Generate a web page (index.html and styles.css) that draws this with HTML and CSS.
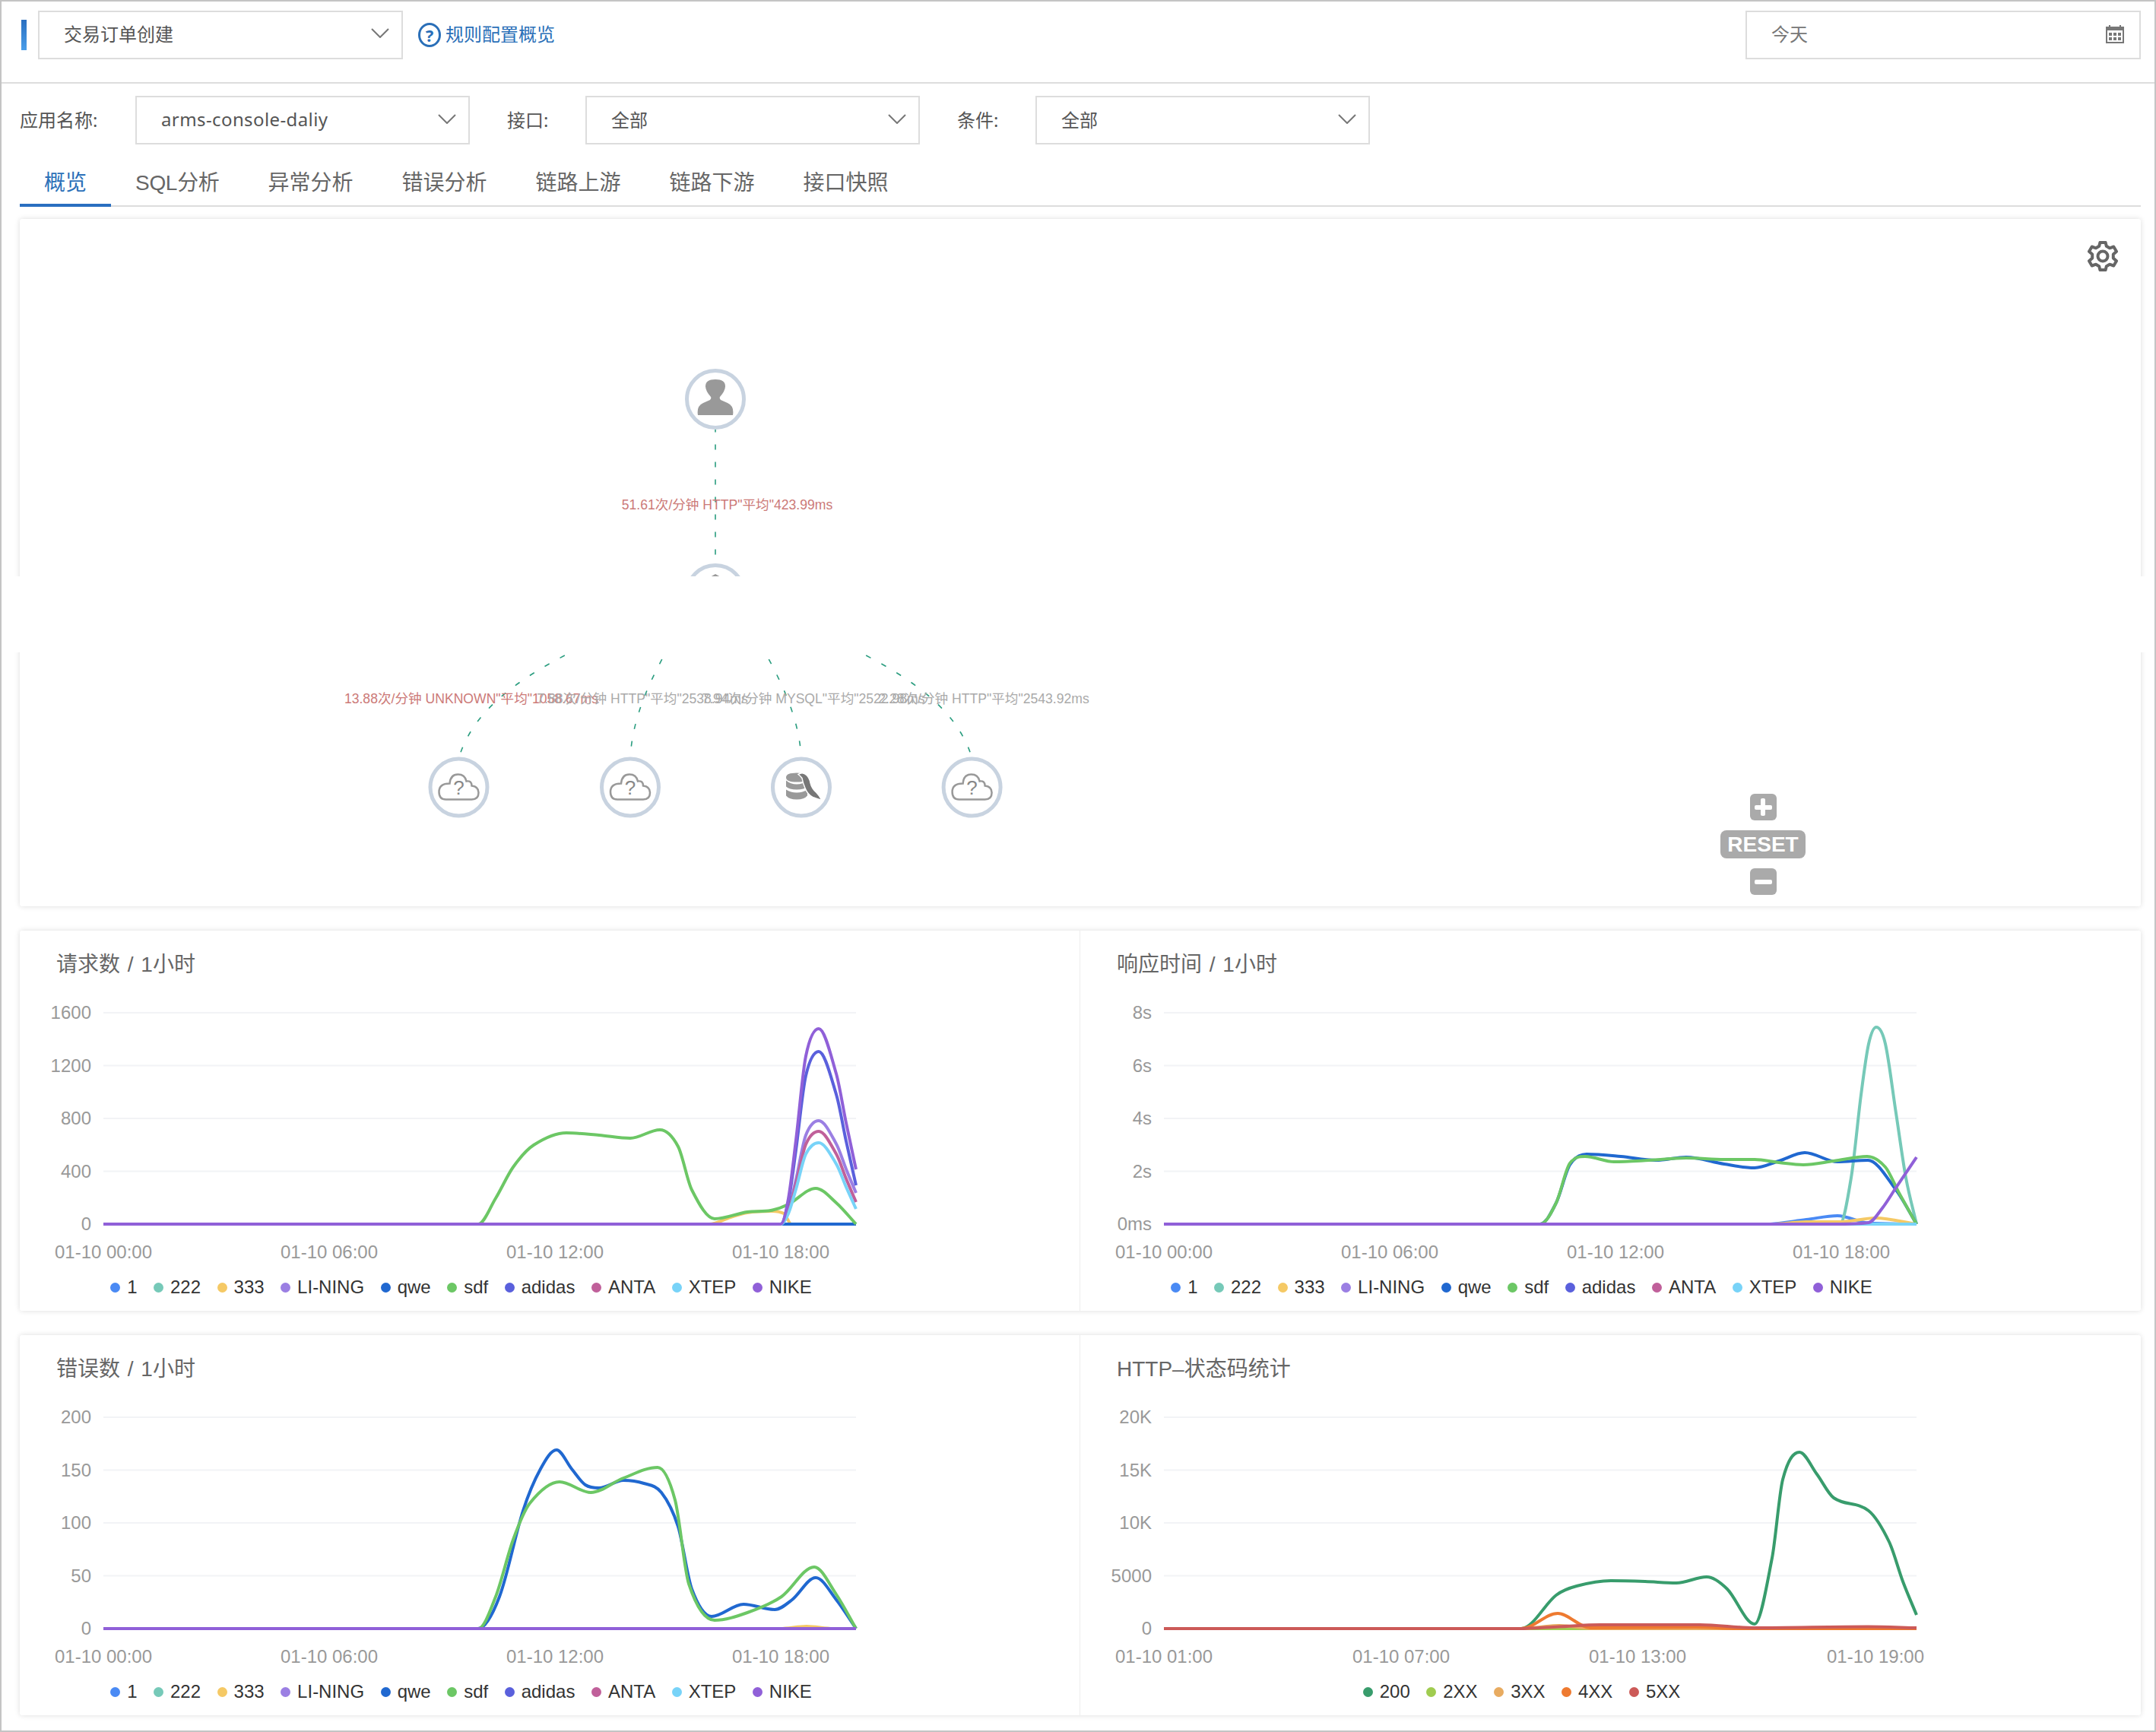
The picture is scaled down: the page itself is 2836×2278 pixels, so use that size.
FILE: index.html
```html
<!DOCTYPE html>
<html lang="en">
<head>
  <meta charset="UTF-8">
  <meta name="viewport" content="width=device-width, initial-scale=1.0">
  <title>交易订单创建</title>
  <link rel="stylesheet" href="styles.css">
</head>
<body>
<div class="page">

  <header class="topbar">
    <span class="accent"></span>
    <div class="select select-title">
      <span>交易订单创建</span>
      <svg class="chevron" viewBox="0 0 24 13"><polyline points="1,1 12,12 23,1"/></svg>
    </div>
    <a class="help-link" href="#">
      <span class="help-icon">?</span>
      <span class="help-text">规则配置概览</span>
    </a>
    <div class="select select-date">
      <span>今天</span>
      <svg class="calendar" viewBox="0 0 24 24">
        <path d="M4 0h2v3H4zM18 0h2v3h-2z"/>
        <path fill-rule="evenodd" d="M0 2h24v22H0zM2 7v15h20V7z"/>
        <path d="M4 10h4v4H4zM10 10h4v4h-4zM16 10h4v4h-4zM4 16h4v4H4zM10 16h4v4h-4zM16 16h4v4h-4z"/>
      </svg>
    </div>
  </header>

  <div class="filters">
    <div class="filter">
      <label class="filter-label filter-label-wide">应用名称:</label>
      <div class="select select-app">
        <span>arms-console-daliy</span>
        <svg class="chevron" viewBox="0 0 24 13"><polyline points="1,1 12,12 23,1"/></svg>
      </div>
    </div>
    <div class="filter">
      <label class="filter-label">接口:</label>
      <div class="select">
        <span>全部</span>
        <svg class="chevron" viewBox="0 0 24 13"><polyline points="1,1 12,12 23,1"/></svg>
      </div>
    </div>
    <div class="filter">
      <label class="filter-label">条件:</label>
      <div class="select">
        <span>全部</span>
        <svg class="chevron" viewBox="0 0 24 13"><polyline points="1,1 12,12 23,1"/></svg>
      </div>
    </div>
  </div>

  <nav class="tabs">
    <a class="tab active" href="#">概览</a>
    <a class="tab tab-latin" href="#">SQL分析</a>
    <a class="tab" href="#">异常分析</a>
    <a class="tab" href="#">错误分析</a>
    <a class="tab" href="#">链路上游</a>
    <a class="tab" href="#">链路下游</a>
    <a class="tab" href="#">接口快照</a>
  </nav>

  <section class="card graph-card">
    <!-- viewBox uses page coordinates so the nodes are easy to read -->
    <svg class="topology" viewBox="26 288 2790 904">
      <defs>
        <g id="cloud">
          <circle class="node" r="37.5"/>
          <path class="cloud-line" d="M-17 16H17Q26 16 26 7Q26-1 17-2Q17-9 10-8Q8-17-1-17Q-11-17-12-5Q-26-5-26 6Q-26 16-17 16Z"/>
          <text class="cloud-mark" y="9">?</text>
        </g>
      </defs>

      <path class="edge" d="M941 565V741"/>
      <path class="edge" d="M760 853C700 884 625 925 603.5 997"/>
      <path class="edge" d="M880 850C858 890 832 940 829 997"/>
      <path class="edge" d="M1002 850C1024 890 1051 940 1054 997"/>
      <path class="edge" d="M1122 853C1182 884 1257 925 1278.6 997"/>

      <circle class="node" cx="941" cy="525" r="37.5"/>
      <path class="node-icon" d="M918 546Q916 534 925 530L934 526Q936 524 935 522Q928 514 928 508Q928 499 941 499Q954 499 954 508Q954 514 947 522Q946 524 948 526L957 530Q966 534 964 546Z"/>

      <circle class="node" cx="941" cy="781" r="37.5"/>
      <polygon class="node-icon" points="934,759 941,755 948,759"/>

      <use href="#cloud" x="603.5" y="1035.5"/>
      <use href="#cloud" x="829" y="1035.5"/>
      <circle class="node" cx="1054" cy="1035.5" r="37.5"/>
      <g transform="translate(1054 1035.5)">
        <path class="node-icon" d="M-20-13Q-20-19-6-19Q8-19 8-13Q8-7-6-7Q-20-7-20-13ZM-20-9Q-14-4-6-4Q2-4 8-9V-1Q4 3-6 3Q-16 3-20-1ZM-20 3Q-14 7-6 7Q2 7 8 3V11Q4 16-6 16Q-16 16-20 11Z"/>
        <path class="dolphin" d="M-4-17Q2-21 7-16Q11-12 12-6Q14 2 20 7Q24 11 27 17Q20 15 15 13Q8 9 5 1Q2-6 1-12Q-1-15-4-17Z"/>
      </g>
      <use href="#cloud" x="1278.6" y="1035.5"/>

      <text class="edge-label edge-label-error" x="956.5" y="670">51.61次/分钟 HTTP"平均"423.99ms</text>
      <text class="edge-label edge-label-error" x="620" y="925">13.88次/分钟 UNKNOWN"平均"1058.67ms</text>
      <text class="edge-label" x="845" y="925">7.88次/分钟 HTTP"平均"2538.94ms</text>
      <text class="edge-label" x="1070" y="925">7.94次/分钟 MYSQL"平均"2522.98ms</text>
      <text class="edge-label" x="1294" y="925">2.28次/分钟 HTTP"平均"2543.92ms</text>
    </svg>

    <svg class="settings" viewBox="0 0 40 40">
      <polygon points="16.4,1.9 23.6,1.9 24.8,6.84 29,9.3 34.3,7.5 38,13.8 33.8,17.6 33.8,22.4 38,26.2 34.3,32.5 29,30.7 24.8,33.16 23.6,38.1 16.4,38.1 15.2,33.16 11,30.7 5.7,32.5 2,26.2 6.2,22.4 6.2,17.6 2,13.8 5.7,7.5 11,9.3 15.2,6.84"/>
      <circle cx="20" cy="20" r="6.5"/>
    </svg>

    <div class="zoom-controls">
      <button class="zoom-btn"><span class="zoom-plus"></span></button>
      <button class="zoom-reset">RESET</button>
      <button class="zoom-btn"><span class="zoom-minus"></span></button>
    </div>
  </section>

  <section class="card chart-row">
    <div class="panel" id="chart-requests"></div>
    <div class="panel" id="chart-response"></div>
  </section>

  <section class="card chart-row">
    <div class="panel" id="chart-errors"></div>
    <div class="panel" id="chart-status"></div>
  </section>

  <!-- the screenshot has a blank strip across the topology -->
  <div class="blank-strip"></div>
</div>

<script src="charts.js"></script>
</body>
</html>
```

FILE: styles.css
```css
* {
  box-sizing: border-box;
}

body {
  margin: 0;
  background-color: #fff;
  font-family: "Liberation Sans", "Noto Sans CJK SC", sans-serif;
  color: #555;
}

.page {
  position: relative;
  width: 2836px;
  height: 2278px;
  overflow: hidden;
  border: 2px solid #c4c4c4;
}

.topbar {
  display: flex;
  align-items: flex-start;
  height: 108px;
  padding: 12px 18px 0 26px;
  border-bottom: 2px solid #ddd;
}

.accent {
  width: 7px;
  height: 40px;
  margin: 12px 15px 0 0;
  background: linear-gradient(#2a6fc0, #4a9eea);
}

.select {
  display: flex;
  align-items: center;
  justify-content: space-between;
  width: 440px;
  height: 64px;
  padding: 0 16px 4px 32px;
  border: 2px solid #ddd;
  font-family: "Noto Sans", "Noto Sans CJK SC", sans-serif;
  font-size: 24px;
  color: #555;
  background-color: #fff;
}

.select-title {
  width: 480px;
  padding-bottom: 6px;
}

.select-app {
  letter-spacing: 0.4px;
}

.select-date {
  width: 520px;
  margin-left: auto;
  padding-right: 20px;
  padding-bottom: 6px;
  color: #777;
}

.chevron {
  width: 24px;
  height: 13px;
  fill: none;
  stroke: #777;
  stroke-width: 2;
}

.calendar {
  width: 24px;
  height: 24px;
  margin-top: 4px;
  fill: #777;
}

.help-link {
  display: flex;
  align-items: center;
  gap: 6px;
  height: 64px;
  margin-left: 20px;
  font-family: "Noto Sans", "Noto Sans CJK SC", sans-serif;
  font-size: 24px;
  color: #2a6fb8;
  text-decoration: none;
}

.help-icon {
  display: flex;
  align-items: center;
  justify-content: center;
  width: 30px;
  height: 32px;
  border: 3px solid #2a6fb8;
  border-radius: 50%;
  font-size: 22px;
  font-weight: bold;
}

.help-text {
  padding-bottom: 6px;
}

.filters {
  display: flex;
  gap: 49px;
  padding: 16px 0 0 24px;
}

.filter {
  display: flex;
  align-items: center;
}

.filter-label {
  width: 103px;
  padding-bottom: 4px;
  font-family: "Noto Sans", "Noto Sans CJK SC", sans-serif;
  font-size: 24px;
  color: #555;
}

.filter-label-wide {
  width: 152px;
}

.tabs {
  display: flex;
  height: 82px;
  margin: 0 18px 0 24px;
  border-bottom: 2px solid #ddd;
}

.tab {
  height: 82px;
  padding: 0 32px;
  font-size: 28px;
  line-height: 102px;
  color: #666;
  text-decoration: none;
}

.tab-latin {
  letter-spacing: -0.3px;
}

.tab.active {
  color: #2a6fb8;
  border-bottom: 4px solid #2a6fc0;
}

.card {
  margin: 0 18px 0 24px;
  background-color: #fff;
  border-radius: 3px;
  box-shadow: 0 0 7px rgba(0, 0, 0, 0.14);
}

.graph-card {
  position: relative;
  height: 904px;
  margin-top: 16px;
}

.topology {
  display: block;
  width: 100%;
  height: 100%;
}

.node {
  fill: #fff;
  stroke: #c8d3e0;
  stroke-width: 5;
}

.node-icon {
  fill: #999;
}

.cloud-line {
  fill: none;
  stroke: #999;
  stroke-width: 2.5;
}

.cloud-mark {
  fill: #888;
  font-size: 26px;
  text-anchor: middle;
}

.dolphin {
  fill: #777;
  stroke: #fff;
  stroke-width: 1.5;
}

.edge {
  fill: none;
  stroke: #2a9d7f;
  stroke-width: 1.6;
  stroke-dasharray: 7 16;
  stroke-dashoffset: 3.5;
}

.edge-label {
  fill: #aaa;
  font-size: 17.6px;
  text-anchor: middle;
}

.edge-label-error {
  fill: #cc7a78;
}

.settings {
  position: absolute;
  top: 29px;
  right: 30px;
  width: 40px;
  height: 40px;
  fill: none;
  stroke: #666;
  stroke-width: 4;
  stroke-linejoin: round;
}

.zoom-controls {
  position: absolute;
  left: 2237px;
  top: 756px;
  display: flex;
  flex-direction: column;
  align-items: center;
  gap: 13px;
  width: 112px;
}

.zoom-btn,
.zoom-reset {
  display: flex;
  align-items: center;
  justify-content: center;
  padding: 0;
  border: 0;
  color: #fff;
  background-color: #aaa;
  font-family: "Liberation Sans", sans-serif;
}

.zoom-btn {
  width: 35px;
  height: 35px;
  border-radius: 6px;
}

.zoom-reset {
  width: 112px;
  height: 37px;
  border-radius: 8px;
  font-size: 28px;
  font-weight: bold;
}

.zoom-plus,
.zoom-minus {
  position: relative;
  display: block;
  width: 23px;
  height: 6px;
  background-color: #fff;
  border-radius: 2px;
}

.zoom-plus::after {
  content: "";
  position: absolute;
  top: -8.5px;
  left: 8.5px;
  width: 6px;
  height: 23px;
  background-color: #fff;
  border-radius: 2px;
}

.chart-row {
  display: grid;
  grid-template-columns: 1394px 1396px;
  height: 500px;
  margin-top: 32px;
}

.panel + .panel {
  border-left: 1px solid #eee;
}

.panel-title {
  height: 88px;
  margin: 0;
  padding-left: 48px;
  font-size: 28px;
  font-weight: normal;
  line-height: 90px;
  word-spacing: 2px;
  color: #666;
}

.chart {
  display: block;
  width: 1394px;
  height: 350px;
}

.grid-line {
  stroke: #f2f3f6;
  stroke-width: 2;
}

.axis-label {
  fill: #999;
  font-size: 24px;
}

.axis-y {
  text-anchor: end;
}

.axis-x {
  text-anchor: middle;
}

.series {
  fill: none;
  stroke-width: 4;
  stroke-linejoin: round;
}

.legend {
  display: flex;
  align-items: center;
  justify-content: center;
  gap: 21.5px;
  width: 1161px;
  height: 62px;
  font-size: 24px;
  color: #333;
}

.legend-item {
  display: flex;
  align-items: center;
  gap: 9px;
}

.legend-dot {
  width: 13px;
  height: 13px;
  border-radius: 50%;
}

.blank-strip {
  position: absolute;
  top: 756px;
  left: 0;
  width: 100%;
  height: 100px;
  background-color: #fff;
}
```

FILE: charts.js
```js
// Points are [x, h]: x in px from the left of the plot, h in px above the baseline.
var PLOT_LEFT = 110;
var PLOT_WIDTH = 990;
var BASELINE = 298;
var ROW_STEP = 69.5;

var COLORS = {
  '1': '#4a8af4', '222': '#76c9b8', '333': '#f5c965', 'LI-NING': '#9b7fe3', 'qwe': '#2068d0',
  'sdf': '#6cc765', 'adidas': '#5a60dc', 'ANTA': '#c0609a', 'XTEP': '#78d3f8', 'NIKE': '#9060d8',
  '200': '#389c6c', '2XX': '#a0cc50', '3XX': '#e8ab60', '4XX': '#ee7a30', '5XX': '#cc5a58'
};

// the late spike shared by most series of the first chart
function spike(p, e) {
  return [[0, 0], [891, 0], [901, 0.13 * p], [911, 0.43 * p], [924, 0.86 * p], [941, p],
    [964, e + (p - e) * 0.68], [977, e + (p - e) * 0.33], [990, e]];
}

var flat = [[0, 0], [990, 0]];

var charts = [
  {
    id: 'chart-requests',
    title: '请求数 / 1小时',
    yLabels: ['1600', '1200', '800', '400', '0'],
    xLabels: [[0, '01-10 00:00'], [297, '01-10 06:00'], [594, '01-10 12:00'], [891, '01-10 18:00']],
    series: {
      '1': flat,
      '222': flat,
      '333': [[0, 0], [797, 0], [825, 9], [847, 15], [878, 17], [895, 14], [905, 0], [990, 0]],
      'LI-NING': spike(136, 41),
      'qwe': flat,
      'sdf': [[0, 0], [493, 0], [516, 34], [539, 75], [566, 104], [609, 120], [652, 117], [693, 113], [732, 124],
        [756, 102], [774, 45], [804, 7], [847, 16], [878, 18], [901, 26], [937, 47], [964, 28], [990, 0]],
      'adidas': spike(227, 51),
      'ANTA': spike(122, 29),
      'XTEP': spike(107, 20),
      'NIKE': spike(257, 72)
    }
  },
  {
    id: 'chart-response',
    title: '响应时间 / 1小时',
    yLabels: ['8s', '6s', '4s', '2s', '0ms'],
    xLabels: [[0, '01-10 00:00'], [297, '01-10 06:00'], [594, '01-10 12:00'], [891, '01-10 18:00']],
    series: {
      '1': [[0, 0], [791, 0], [845, 6], [886, 11], [927, 1.5], [990, 0]],
      '222': [[0, 0], [889, 0], [904, 61], [917, 170], [927, 237], [937, 259], [949, 237], [963, 146], [976, 61], [990, 0]],
      '333': [[0, 0], [800, 0], [845, 3], [890, 3], [936, 8], [990, 0]],
      'LI-NING': flat,
      'qwe': [[0, 0], [495, 0], [516, 28], [534, 78], [556, 92], [601, 89], [647, 84], [687, 88], [737, 79], [777, 74],
        [809, 83], [843, 94], [886, 82], [926, 84], [963, 45], [990, 0]],
      'sdf': [[0, 0], [495, 0], [516, 28], [534, 80], [554, 89], [592, 82], [638, 84], [687, 87], [737, 85], [777, 85],
        [809, 81], [841, 78], [881, 83], [925, 89], [949, 75], [967, 41], [990, 0]],
      'adidas': flat,
      'ANTA': flat,
      'XTEP': flat,
      'NIKE': [[0, 0], [881, 0], [927, 2], [945, 21], [963, 48], [990, 88]]
    }
  },
  {
    id: 'chart-errors',
    title: '错误数 / 1小时',
    yLabels: ['200', '150', '100', '50', '0'],
    xLabels: [[0, '01-10 00:00'], [297, '01-10 06:00'], [594, '01-10 12:00'], [891, '01-10 18:00']],
    series: {
      '1': flat,
      '222': flat,
      '333': [[0, 0], [890, 0], [925, 3], [960, 0], [990, 0]],
      'LI-NING': flat,
      'qwe': [[0, 0], [493, 0], [521, 42], [552, 155], [575, 210], [596, 235], [616, 210], [634, 189], [652, 185], [684, 195],
        [711, 191], [734, 179], [756, 134], [774, 52], [800, 16], [842, 32], [883, 25], [906, 38], [937, 67], [964, 38], [990, 0]],
      'sdf': [[0, 0], [493, 0], [516, 42], [539, 117], [561, 165], [600, 193], [641, 179], [684, 198], [729, 212], [752, 169],
        [770, 59], [804, 11], [847, 21], [892, 42], [935, 81], [964, 45], [990, 0]],
      'adidas': flat,
      'ANTA': flat,
      'XTEP': flat,
      'NIKE': flat
    }
  },
  {
    id: 'chart-status',
    title: 'HTTP–状态码统计',
    yLabels: ['20K', '15K', '10K', '5000', '0'],
    xLabels: [[0, '01-10 01:00'], [312, '01-10 07:00'], [623, '01-10 13:00'], [936, '01-10 19:00']],
    series: {
      '200': [[0, 0], [470, 0], [516, 44], [543, 56], [588, 63], [633, 62], [674, 60], [714, 68], [741, 52], [777, 6],
        [800, 93], [814, 196], [836, 232], [859, 203], [881, 172], [927, 155], [954, 114], [972, 62], [990, 18]],
      '2XX': flat,
      '3XX': [[0, 0], [470, 0], [520, 4], [565, 0], [990, 0]],
      '4XX': [[0, 0], [470, 0], [518, 20], [561, 1], [700, 2], [755, 0], [990, 0]],
      '5XX': [[0, 0], [466, 0], [520, 2.5], [574, 5], [705, 5], [777, 1], [926, 2.5], [990, 1]]
    }
  }
];

// smooth cubic through the points: flat at local extremes, limited so it does not overshoot
function linePath(points) {
  var n = points.length;
  var slopes = [];
  var tangents = [];
  var i;
  for (i = 0; i < n - 1; i++) {
    slopes.push((points[i + 1][1] - points[i][1]) / (points[i + 1][0] - points[i][0]));
  }
  tangents[0] = slopes[0];
  tangents[n - 1] = slopes[n - 2];
  for (i = 1; i < n - 1; i++) {
    if (slopes[i - 1] * slopes[i] <= 0) {
      tangents[i] = 0;
    } else {
      var central = (points[i + 1][1] - points[i - 1][1]) / (points[i + 1][0] - points[i - 1][0]);
      var limit = 3 * Math.min(Math.abs(slopes[i - 1]), Math.abs(slopes[i]));
      tangents[i] = Math.abs(central) > limit ? (central > 0 ? limit : -limit) : central;
    }
  }
  var d = 'M' + (PLOT_LEFT + points[0][0]) + ' ' + (BASELINE - points[0][1]);
  for (i = 0; i < n - 1; i++) {
    var dx = (points[i + 1][0] - points[i][0]) / 3;
    d += 'C' + (PLOT_LEFT + points[i][0] + dx) + ' ' + (BASELINE - points[i][1] - tangents[i] * dx) + ' ' +
      (PLOT_LEFT + points[i + 1][0] - dx) + ' ' + (BASELINE - points[i + 1][1] + tangents[i + 1] * dx) + ' ' +
      (PLOT_LEFT + points[i + 1][0]) + ' ' + (BASELINE - points[i + 1][1]);
  }
  return d;
}

function drawChart(chart) {
  var svg = '';
  chart.yLabels.forEach(function (label, i) {
    var y = BASELINE - (4 - i) * ROW_STEP;
    svg += '<line class="grid-line" x1="' + PLOT_LEFT + '" x2="' + (PLOT_LEFT + PLOT_WIDTH) + '" y1="' + y + '" y2="' + y + '"/>';
    svg += '<text class="axis-label axis-y" x="94" y="' + (y + 8) + '">' + label + '</text>';
  });
  chart.xLabels.forEach(function (tick) {
    svg += '<text class="axis-label axis-x" x="' + (PLOT_LEFT + tick[0]) + '" y="342.5">' + tick[1] + '</text>';
  });

  var legend = '';
  Object.keys(chart.series).forEach(function (name) {
    svg += '<path class="series" stroke="' + COLORS[name] + '" d="' + linePath(chart.series[name]) + '"/>';
    legend += '<span class="legend-item"><i class="legend-dot" style="background-color:' + COLORS[name] + '"></i>' + name + '</span>';
  });

  document.getElementById(chart.id).innerHTML =
    '<h3 class="panel-title">' + chart.title + '</h3>' +
    '<svg class="chart" viewBox="0 0 1394 350">' + svg + '</svg>' +
    '<div class="legend">' + legend + '</div>';
}

charts.forEach(drawChart);
```
